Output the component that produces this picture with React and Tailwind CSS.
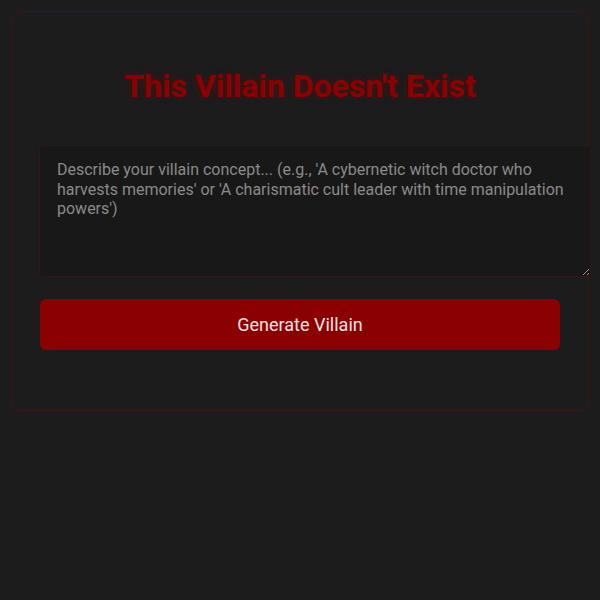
export default function App() {
  return (
    <div className="min-h-[600px] bg-[#1c1c1c] p-[11px] font-['Roboto',sans-serif]">
      <div className="rounded-[10px] border border-[#3e1515] px-[29px] pt-[44px] pb-[60px]">
        <h1 className="text-center text-[32px] font-bold leading-[60px] text-[#8b0000] [text-shadow:0_0_6px_rgba(139,0,0,0.45)]">
          This Villain Doesn&apos;t Exist
        </h1>
        <textarea
          className="mt-[29px] ml-[-2px] box-content block h-[102px] w-full resize-y rounded-[4px] border border-[#331616] bg-[#181818] pl-[17px] pr-[15px] py-[14px] text-[16px] leading-[19.5px] text-[#ddd] placeholder:text-[#8a8a8a] outline-none"
          placeholder="Describe your villain concept... (e.g., 'A cybernetic witch doctor who harvests memories' or 'A charismatic cult leader with time manipulation powers')"
        />
        <button className="mt-[22px] ml-[-1px] block h-[51px] w-[calc(100%+2px)] rounded-[6px] bg-[#8b0000] text-[18px] text-[#f3e3e3]">
          Generate Villain
        </button>
      </div>
    </div>
  );
}
